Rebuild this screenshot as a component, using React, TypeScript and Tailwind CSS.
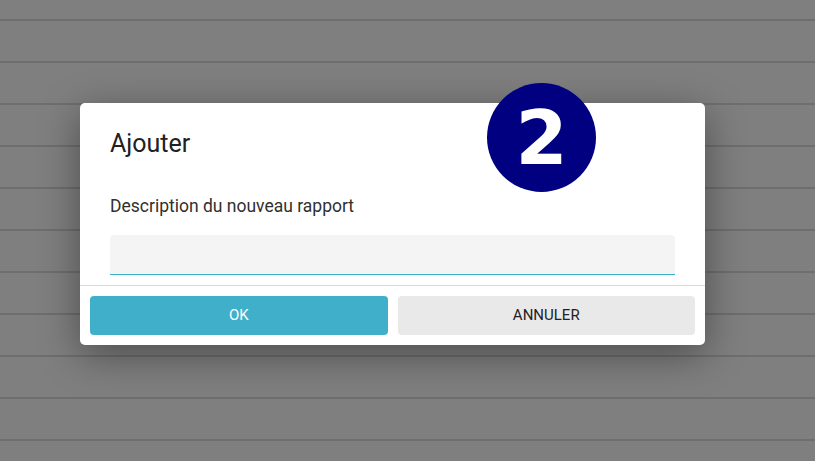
import React from "react";

const ROWS = Array.from({ length: 11 });

export default function App() {
  return (
    <div
      className="relative h-[461px] w-[815px] overflow-hidden bg-[#7f7f7f]"
      style={{ fontFamily: "Roboto, 'Liberation Sans', sans-serif" }}
    >
      {/* background list, dimmed */}
      <div className="flex flex-col">
        <div className="h-[19px]" />
        {ROWS.map((_, i) => (
          <div key={i} className="h-[42px] border-t-2 border-[#6e6e6e]" />
        ))}
      </div>

      {/* dialog */}
      <div className="absolute left-[80px] top-[103px] w-[625px] rounded-[5px] bg-white shadow-[0_10px_40px_rgba(0,0,0,0.4)]">
        <div className="px-[30px] pt-[26px]">
          <h2 className="text-[25px] leading-[30px] font-normal text-[#212121]">Ajouter</h2>
          <label className="mt-[35px] block text-[17.5px] leading-[24px] text-[#303030]">
            Description du nouveau rapport
          </label>
          <input
            type="text"
            className="mt-[17px] block h-[40px] w-[565px] rounded-t-[4px] border-0 border-b border-b-[#3fb0c9] bg-[#f4f4f4] px-3 outline-none"
          />
        </div>
        <div className="mt-[10px] flex gap-[10px] border-t border-[#dcdcdc] px-[10px] pb-[10px] pt-[10px]">
          <button
            type="button"
            className="h-[39px] flex-1 rounded-[4px] bg-[#40afc9] text-[15px] text-white"
          >
            OK
          </button>
          <button
            type="button"
            className="h-[39px] flex-1 rounded-[4px] bg-[#e9e9e9] text-[15px] text-[#222]"
          >
            ANNULER
          </button>
        </div>
      </div>

      {/* step badge */}
      <div className="absolute left-[487px] top-[83px] flex h-[109px] w-[109px] items-center justify-center rounded-full bg-[#000080]">
        <span
          className="pt-[2px] text-[75px] font-bold leading-none text-white"
          style={{ fontFamily: "'DejaVu Sans', sans-serif" }}
        >
          2
        </span>
      </div>
    </div>
  );
}
